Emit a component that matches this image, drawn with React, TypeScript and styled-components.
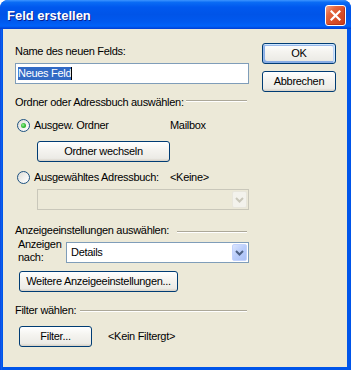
import React from 'react';
import styled, { createGlobalStyle, css } from 'styled-components';

const Global = createGlobalStyle`
  html, body { margin: 0; padding: 0; background: #ffffff; }
  body { font-family: "Liberation Sans", Arial, sans-serif; }
`;

const Window = styled.div`
  width: 351px;
  height: 370px;
  display: flex;
  flex-direction: column;
  border-radius: 8px 8px 0 0;
  overflow: hidden;
  background: #0055e5;
`;

const TitleBar = styled.div`
  height: 29px;
  flex: none;
  box-sizing: border-box;
  display: flex;
  justify-content: space-between;
  align-items: flex-start;
  padding: 0 5px 0 7px;
  background: linear-gradient(
    180deg,
    #3d95ff 0%,
    #0a6cf5 8%,
    #0058ee 25%,
    #0054e8 50%,
    #0059ef 75%,
    #0062f9 90%,
    #0048dd 97%,
    #003dd7 100%
  );
`;

const Title = styled.span`
  padding-top: 8px;
  font: bold 13px/15px "Liberation Sans", Arial, sans-serif;
  color: #ffffff;
  text-shadow: 1px 1px 0 #0a1f8f;
`;

const CloseButton = styled.div`
  width: 21px;
  height: 21px;
  margin-top: 5px;
  box-sizing: border-box;
  border: 1px solid #ffffff;
  border-radius: 3px;
  display: grid;
  place-items: center;
  background: linear-gradient(135deg, #f3a38a 0%, #e5683f 28%, #d9502b 55%, #c93d1a 100%);
  box-shadow: inset -1px -1px 0 #b8341a;
`;

const Frame = styled.div`
  flex: 1;
  display: flex;
  padding: 0 4px 3px 3px;
  background: linear-gradient(90deg, #0831d9 0px, #166aee 1px, #0055ea 2px);
`;

const Body = styled.div`
  flex: 1;
  display: flex;
  gap: 13px;
  box-sizing: border-box;
  padding: 14px 11px 0 12px;
  background: #ece9d8;
  font-size: 11px;
  line-height: 13px;
  letter-spacing: -0.3px;
  color: #000000;
`;

const LeftCol = styled.div`
  width: 234px;
  display: flex;
  flex-direction: column;
  align-items: flex-start;
  padding-top: 2px;
`;

const RightCol = styled.div`
  width: 74px;
  display: flex;
  flex-direction: column;
  gap: 7px;
`;

const Text = styled.span`
  display: block;
  white-space: nowrap;
`;

const Button = styled.button<{ $w: number; $mt?: number; $ml?: number; $default?: boolean }>`
  flex: none;
  width: ${(p) => p.$w}px;
  height: 21px;
  margin: ${(p) => p.$mt ?? 0}px 0 0 ${(p) => p.$ml ?? 0}px;
  padding: 0;
  box-sizing: border-box;
  border: 1px solid #003c74;
  border-radius: 3px;
  background: linear-gradient(180deg, #ffffff 0%, #f5f4f0 40%, #ecebe6 86%, #d6d0c5 100%);
  font: 11px/13px "Liberation Sans", Arial, sans-serif;
  letter-spacing: -0.3px;
  color: #000000;
  ${(p) =>
    p.$default &&
    css`
      box-shadow: inset -1px 1px #cee7ff, inset 1px 2px #98b8ea, inset -2px 2px #bcd4f6,
        inset 1px -1px #89ade4, inset 2px -2px #89ade4;
    `}
`;

const TextField = styled.div`
  width: 234px;
  height: 21px;
  margin-top: 5px;
  box-sizing: border-box;
  border: 1px solid #7f9db9;
  background: #ffffff;
  padding-left: 2px;
  display: flex;
  align-items: center;
`;

const Selected = styled.span`
  background: #316ac5;
  color: #ffffff;
  line-height: 13px;
  white-space: nowrap;
`;

const Caret = styled.span`
  width: 1px;
  height: 13px;
  background: #000000;
`;

const SectionHeader = styled.div<{ $mt: number }>`
  width: 232px;
  display: flex;
  align-items: flex-start;
  margin-top: ${(p) => p.$mt}px;
`;

const Etched = styled.div<{ $dy: number; $gap: number }>`
  flex: 1;
  height: 0;
  margin: ${(p) => p.$dy}px 0 0 ${(p) => p.$gap}px;
  border-top: 1px solid #aca899;
  border-bottom: 1px solid #ffffff;
`;

const RadioRow = styled.div<{ $mt: number }>`
  display: grid;
  grid-template-columns: 153px auto;
  align-items: center;
  height: 13px;
  margin: ${(p) => p.$mt}px 0 0 2px;
`;

const RadioLabel = styled.label`
  display: flex;
  align-items: center;
  gap: 4px;
  white-space: nowrap;
`;

const RadioCircle = styled.span<{ $checked?: boolean }>`
  width: 13px;
  height: 13px;
  box-sizing: border-box;
  border-radius: 50%;
  border: 1px solid #1c5180;
  background: linear-gradient(135deg, #dcdcd7 0%, #f4f4f2 60%, #ffffff 100%);
  display: grid;
  place-items: center;
  &::after {
    content: '';
    width: 5px;
    height: 5px;
    border-radius: 50%;
    background: radial-gradient(circle at 40% 40%, #9cf29c 0%, #3fc23f 45%, #1a9a1a 100%);
    display: ${(p) => (p.$checked ? 'block' : 'none')};
  }
`;

const Combo = styled.div<{ $w: number; $mt: number; $ml?: number; $disabled?: boolean }>`
  flex: none;
  width: ${(p) => p.$w}px;
  height: 21px;
  margin: ${(p) => p.$mt}px 0 0 ${(p) => p.$ml ?? 0}px;
  box-sizing: border-box;
  padding: 1px;
  border: 1px solid ${(p) => (p.$disabled ? '#c9c7ba' : '#7f9db9')};
  background: ${(p) => (p.$disabled ? '#ece9d8' : '#ffffff')};
  display: flex;
  align-items: center;
  justify-content: space-between;
`;

const ComboText = styled.span`
  padding-left: 3px;
  white-space: nowrap;
`;

const DropButton = styled.span<{ $disabled?: boolean }>`
  width: 15px;
  height: 17px;
  box-sizing: border-box;
  border-radius: 2px;
  display: grid;
  place-items: center;
  ${(p) =>
    p.$disabled
      ? css`
          border: 1px solid #e8e6dc;
          background: #f3f2ec;
        `
      : css`
          border: 1px solid #c3d3fd;
          background: linear-gradient(135deg, #dbe5fe 0%, #bccffb 45%, #aac0f6 100%);
        `}
`;

const ViewRow = styled.div`
  display: flex;
  margin: 1px 0 0 3px;
`;

const ViewLabel = styled.span`
  width: 48px;
  white-space: nowrap;
`;

const FilterRow = styled.div`
  display: flex;
  align-items: center;
  gap: 16px;
  margin: 9px 0 0 4px;
`;

const Chevron = ({ color }: { color: string }) => (
  <svg width="9" height="6" viewBox="0 0 9 6">
    <path d="M1 1 L4.5 4.5 L8 1" fill="none" stroke={color} strokeWidth="2" />
  </svg>
);

export default function App() {
  return (
    <>
      <Global />
      <Window>
        <TitleBar>
          <Title>Feld erstellen</Title>
          <CloseButton>
            <svg width="11" height="11" viewBox="0 0 11 11">
              <path d="M1.5 1.5 L9.5 9.5 M9.5 1.5 L1.5 9.5" stroke="#ffffff" strokeWidth="2.2" strokeLinecap="square" />
            </svg>
          </CloseButton>
        </TitleBar>
        <Frame>
          <Body>
            <LeftCol>
              <Text>Name des neuen Felds:</Text>
              <TextField>
                <Selected>Neues Feld</Selected>
                <Caret />
              </TextField>

              <SectionHeader $mt={12}>
                <Text>Ordner oder Adressbuch auswählen:</Text>
                <Etched $dy={4} $gap={2} />
              </SectionHeader>
              <RadioRow $mt={10}>
                <RadioLabel>
                  <RadioCircle $checked />
                  Ausgew. Ordner
                </RadioLabel>
                <Text>Mailbox</Text>
              </RadioRow>
              <Button $w={133} $mt={9} $ml={22}>
                Ordner wechseln
              </Button>
              <RadioRow $mt={9}>
                <RadioLabel>
                  <RadioCircle />
                  Ausgewähltes Adressbuch:
                </RadioLabel>
                <Text>&lt;Keine&gt;</Text>
              </RadioRow>
              <Combo $w={212} $mt={5} $ml={22} $disabled>
                <ComboText />
                <DropButton $disabled>
                  <Chevron color="#c9c7ba" />
                </DropButton>
              </Combo>

              <SectionHeader $mt={14}>
                <Text>Anzeigeeinstellungen auswählen:</Text>
                <Etched $dy={7} $gap={8} />
              </SectionHeader>
              <ViewRow>
                <ViewLabel>
                  Anzeigen
                  <br />
                  nach:
                </ViewLabel>
                <Combo $w={183} $mt={4}>
                  <ComboText>Details</ComboText>
                  <DropButton>
                    <Chevron color="#4d6185" />
                  </DropButton>
                </Combo>
              </ViewRow>
              <Button $w={159} $mt={7} $ml={4}>
                Weitere Anzeigeeinstellungen...
              </Button>

              <SectionHeader $mt={12}>
                <Text>Filter wählen:</Text>
                <Etched $dy={6} $gap={4} />
              </SectionHeader>
              <FilterRow>
                <Button $w={73}>Filter...</Button>
                <Text>&lt;Kein Filtergt&gt;</Text>
              </FilterRow>
            </LeftCol>
            <RightCol>
              <Button $w={74} $default>
                OK
              </Button>
              <Button $w={74}>Abbrechen</Button>
            </RightCol>
          </Body>
        </Frame>
      </Window>
    </>
  );
}
